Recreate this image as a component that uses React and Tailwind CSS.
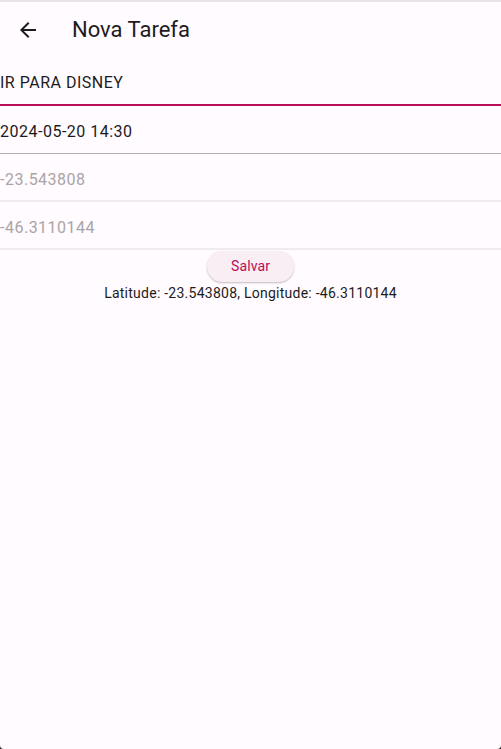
export default function App() {
  return (
    <div className="min-h-[749px] bg-[#2b2325]" style={{ fontFamily: "Roboto, 'Liberation Sans', sans-serif" }}>
      <div className="h-[749px] bg-[#fffbfe] rounded-b-[4px] border-t-2 border-[#e7e3e6] flex flex-col">
        {/* App bar */}
        <header className="h-[56px] flex items-center">
          <button className="w-[56px] h-[56px] flex items-center justify-center">
            <svg width="24" height="24" viewBox="0 0 24 24" className="text-[#1d1b1e] fill-current">
              <path d="M20 11H7.83l5.59-5.59L12 4l-8 8 8 8 1.41-1.41L7.83 13H20v-2z" />
            </svg>
          </button>
          <h1 className="ml-[16px] text-[22px] text-[#1d1b1e] leading-none">Nova Tarefa</h1>
        </header>

        <div className="flex flex-col">
          <div className="h-[48px] flex items-center border-b-2 border-[#bb0c5a] text-[16px] tracking-[0.5px] text-[#1d1b1e] pt-[4px]">
            IR PARA DISNEY
          </div>
          <div className="h-[48px] flex items-center border-b border-[#b5aeb2] text-[16px] tracking-[0.5px] text-[#1d1b1e] pt-[4px]">
            2024-05-20 14:30
          </div>
          <div className="h-[48px] flex items-center border-b-2 border-[#f0ebee] text-[16px] tracking-[0.5px] text-[#aaa4a8] pt-[5px]">
            -23.543808
          </div>
          <div className="h-[48px] flex items-center border-b-2 border-[#f0ebee] text-[16px] tracking-[0.5px] text-[#aaa4a8] pt-[5px]">
            -46.3110144
          </div>
        </div>

        <div className="flex flex-col items-center">
          <button className="mt-[1px] h-[31px] w-[87px] rounded-full bg-[#f8eef3] shadow-[0_1px_2px_rgba(0,0,0,0.25)] text-[14px] text-[#bb0c5a] tracking-[0.1px]">
            Salvar
          </button>
          <p className="mt-[1px] text-[14px] tracking-[0.25px] text-[#1d1b1e] leading-[20px]">
            Latitude: -23.543808, Longitude: -46.3110144
          </p>
        </div>
      </div>
    </div>
  );
}
